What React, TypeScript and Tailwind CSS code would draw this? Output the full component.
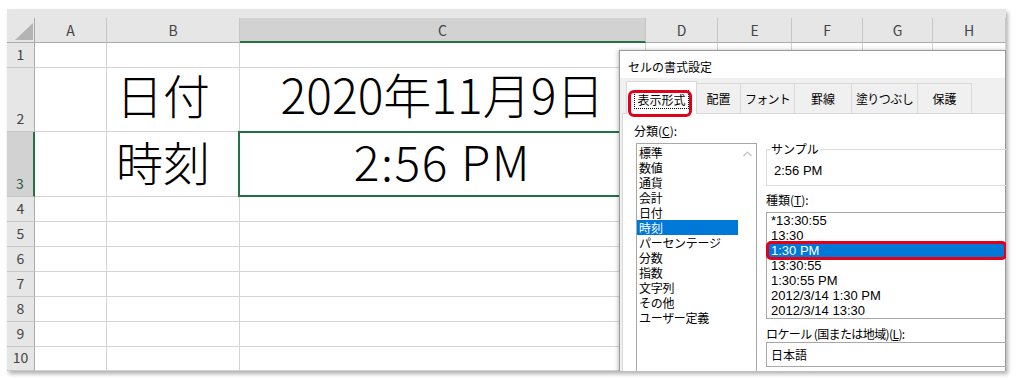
import React from "react";

const colLetters = ["A", "B", "C", "D", "E", "F", "G", "H"];
const rows = [1, 2, 3, 4, 5, 6, 7, 8, 9, 10];

const leftItems = [
  "標準",
  "数値",
  "通貨",
  "会計",
  "日付",
  "時刻",
  "パーセンテージ",
  "分数",
  "指数",
  "文字列",
  "その他",
  "ユーザー定義",
];

const rightItems = [
  "*13:30:55",
  "13:30",
  "1:30 PM",
  "13:30:55",
  "1:30:55 PM",
  "2012/3/14 1:30 PM",
  "2012/3/14 13:30",
];

function ColHeader({ c }: { c: string }) {
  if (c === "C") {
    return (
      <div className="flex items-center justify-center pt-[2px] bg-[#d2d2d2] border-r border-r-[#c6c6c6] border-b-2 border-b-[#217346] text-[14px] text-[#444]">
        {c}
      </div>
    );
  }
  return (
    <div className="flex items-center justify-center pt-[1px] bg-[#e6e6e6] border-r border-r-[#c6c6c6] border-b border-b-[#ababab] text-[14px] text-[#444]">
      {c}
    </div>
  );
}

function RowHeader({ r }: { r: number }) {
  if (r === 3) {
    return (
      <div className="flex items-end justify-center pb-[3px] leading-[20px] bg-[#d2d2d2] border-b border-b-[#c6c6c6] border-r-2 border-r-[#217346] text-[14px] text-[#2d5a40]">
        {r}
      </div>
    );
  }
  return (
    <div className="flex items-end justify-center pb-[3px] leading-[20px] bg-[#e6e6e6] border-b border-b-[#c6c6c6] border-r border-r-[#ababab] text-[14px] text-[#444]">
      {r}
    </div>
  );
}

function Cell({ r, c }: { r: number; c: string }) {
  const base = "relative border-r border-b border-[#d4d4d4]";
  if (r === 2 && c === "B") {
    return (
      <div className={base + " flex items-end pl-[9px] pb-[14px] text-[47px] font-light leading-none text-black"}>
        日付
      </div>
    );
  }
  if (r === 2 && c === "C") {
    return (
      <div className={base + " flex items-end justify-center pb-[14px] text-[48px] font-light leading-none text-black"}>
        2020年11月9日
      </div>
    );
  }
  if (r === 3 && c === "B") {
    return (
      <div className={base + " flex items-end pl-[9px] pb-[12px] text-[47px] font-light leading-none text-black"}>
        時刻
      </div>
    );
  }
  if (r === 3 && c === "C") {
    return (
      <div className={base + " flex items-end justify-center pb-[12px] text-[48px] font-light leading-none tracking-[1.5px] text-black"}>
        2:56 PM
        <div className="absolute -left-[2px] -top-[1px] -right-[1px] -bottom-[1px] border-2 border-[#217346]" />
      </div>
    );
  }
  return <div className={base} />;
}

function Dialog() {
  return (
    <div className="absolute left-[612px] top-[41px] w-[387px] h-[340px] bg-[#f0f0f0] border border-[#9a9a9a] shadow-[-1px_0_4px_rgba(0,0,0,0.25)] text-[12px] text-black">
      {/* title */}
      <div className="h-[27px] bg-white flex items-center pl-[8px] pt-[4px]">セルの書式設定</div>

      {/* tab row */}
      <div className="relative h-[35px] flex items-end pl-[6px]">
        <div className="relative z-[5] h-[33px] w-[71px] -mb-[1px] bg-white border-t border-l border-r border-[#d9d9d9] flex items-center justify-center pt-[2px]">
          <span className="border border-dotted border-black px-[2px] leading-[17px]">表示形式</span>
        </div>
        <div className="h-[30px] w-[44px] border-t border-r border-[#d9d9d9] flex items-center justify-center">配置</div>
        <div className="h-[30px] w-[54px] border-t border-r border-[#d9d9d9] flex items-center justify-center tracking-[-0.8px]">フォント</div>
        <div className="h-[30px] w-[57px] border-t border-r border-[#d9d9d9] flex items-center justify-center">罫線</div>
        <div className="h-[30px] w-[66px] border-t border-r border-[#d9d9d9] flex items-center justify-center tracking-[-0.6px]">塗りつぶし</div>
        <div className="h-[30px] w-[54px] border-t border-r border-[#d9d9d9] flex items-center justify-center">保護</div>
        <div className="absolute z-10 left-[8px] top-[12px] w-[64px] h-[27px] border-[3px] border-[#e2001a] rounded-[6px]" />
      </div>

      {/* tab page */}
      <div className="ml-[2px] h-[270px] bg-white border-t border-l border-[#d9d9d9] flex pl-[11px] pt-[9px]">
        {/* left column */}
        <div className="w-[123px] flex flex-col">
          <div className="leading-[16px]">
            分類(<span className="underline">C</span>):
          </div>
          <div className="mt-[4px] ml-[2px] w-[121px] h-[240px] border border-[#a8a8a8] flex">
            <div className="w-[101px] pt-[1px] flex flex-col">
              {leftItems.map((it) =>
                it === "時刻" ? (
                  <div key={it} className="h-[15px] leading-[15px] pl-[2px] bg-[#0078d7] text-white">
                    {it}
                  </div>
                ) : (
                  <div key={it} className="h-[15px] leading-[15px] pl-[2px] tracking-[-0.3px]">
                    {it}
                  </div>
                )
              )}
            </div>
            <div className="w-[18px] flex justify-center pt-[7px]">
              <svg width="9" height="6" viewBox="0 0 9 6">
                <polyline points="0.5,5 4.5,1 8.5,5" fill="none" stroke="#c2c2c2" strokeWidth="1.2" />
              </svg>
            </div>
          </div>
        </div>

        {/* right column */}
        <div className="ml-[9px] flex-1 flex flex-col pt-[26px]">
          <div className="relative h-[37px] border border-[#dcdcdc] -mr-[2px]">
            <div className="absolute -top-[9px] left-[3px] bg-white px-[1px] leading-[16px]">サンプル</div>
            <div className="pl-[7px] pt-[13px] leading-[16px] text-[13px] font-['Liberation_Sans',sans-serif]">2:56 PM</div>
          </div>
          <div className="mt-[6px] leading-[16px]">
            種類(<span className="underline">T</span>):
          </div>
          <div className="relative mt-[4px] h-[107px] border border-[#a8a8a8] -mr-[2px] flex flex-col font-['Liberation_Sans',sans-serif] text-[13px]">
            {rightItems.map((it, i) =>
              i === 2 ? (
                <div key={i} className="h-[15px] leading-[15px] pl-[4px] bg-[#0078d7] text-white">
                  {it}
                </div>
              ) : (
                <div key={i} className="h-[15px] leading-[15px] pl-[4px]">
                  {it}
                </div>
              )
            )}
            <div className="absolute -left-[1px] -right-[1px] top-[28px] h-[19px] border-[3px] border-[#e2001a] rounded-[5px]" />
          </div>
          <div className="mt-[7px] leading-[16px] tracking-[-0.6px]">
            ロケール (国または地域)(<span className="underline">L</span>):
          </div>
          <div className="h-[25px] border border-[#a8a8a8] -mr-[2px] flex items-center pl-[4px] pt-[1px]">日本語</div>
        </div>
      </div>
    </div>
  );
}

export default function App() {
  return (
    <div className="w-[1017px] h-[380px] bg-white pt-[9px] pl-[7px] font-['Noto_Sans_CJK_JP','Noto_Sans',sans-serif]">
      <div className="relative w-[999px] h-[362px] overflow-hidden bg-white shadow-[2px_3px_4px_rgba(0,0,0,0.3)]">
        <div className="h-[9px] bg-[#e6e6e6]" />
        <div className="grid grid-cols-[28px_72px_133px_406px_72px_74px_71px_70px_73px] grid-rows-[25px_25px_64px_65px_25px_25px_25px_25px_25px_25px_24px]">
          <div className="relative bg-[#e6e6e6] border-r border-b border-[#ababab]">
            <svg className="absolute right-[1px] bottom-[2px]" width="18" height="17" viewBox="0 0 18 17">
              <polygon points="18,0 18,17 0,17" fill="#b4b4b4" />
            </svg>
          </div>
          {colLetters.map((c) => (
            <ColHeader key={c} c={c} />
          ))}
          {rows.map((r) => (
            <React.Fragment key={r}>
              <RowHeader r={r} />
              {colLetters.map((c) => (
                <Cell key={c} r={r} c={c} />
              ))}
            </React.Fragment>
          ))}
        </div>
        <Dialog />
      </div>
    </div>
  );
}
